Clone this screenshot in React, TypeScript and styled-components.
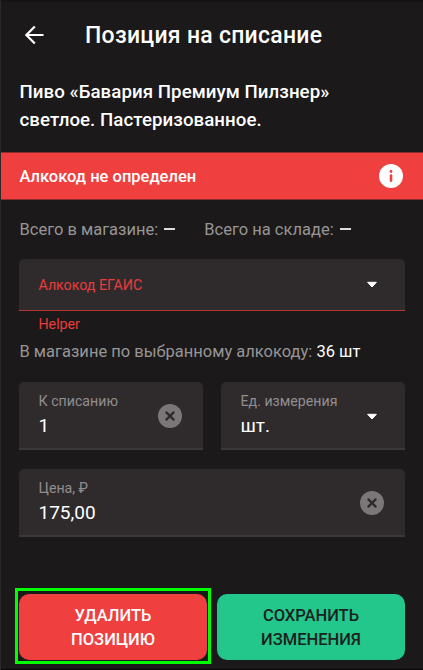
import React from "react";
import styled, { createGlobalStyle } from "styled-components";

const GlobalStyle = createGlobalStyle`
  * { box-sizing: border-box; }
  body { margin: 0; background: #1b191a; }
`;

const Screen = styled.main`
  display: flex;
  flex-direction: column;
  width: 423px;
  height: 670px;
  padding-left: 1px;
  overflow: hidden;
  color: #fff;
  background: #1b191a;
  font-family: Roboto, sans-serif;
  white-space: nowrap;
  box-shadow: inset 1px 0 #2b292a, inset 0 2px #151314, inset 0 -1px #050304;
`;

const Header = styled.header`
  display: flex;
  align-items: center;
  height: 70px;
  padding-left: 23.5px;
  gap: 41.5px;
`;

const Title = styled.h1`
  margin: 0;
  padding-top: 2px;
  font-size: 23px;
  font-weight: 500;
  line-height: 28px;
  letter-spacing: 0.27px;
`;

const Product = styled.h2`
  height: 82px;
  margin: 0;
  padding: 8px 0 0 18.5px;
  font-size: 18.7px;
  font-weight: 500;
  line-height: 28px;
  letter-spacing: 0.05px;
`;

const Banner = styled.section`
  display: flex;
  align-items: center;
  justify-content: space-between;
  height: 48px;
  padding: 0 20px 0 18.5px;
  background: #ef3f3e;
  border-top: 1px solid #8a2e2e;
  border-bottom: 1px solid #8a2e2e;
  font-size: 16.5px;
  font-weight: 500;
`;

const Totals = styled.div`
  display: flex;
  align-items: center;
  height: 59px;
  padding-left: 18.5px;
  gap: 29px;
`;

const Info = styled.span`
  color: #979596;
  font-size: 16.5px;
  line-height: 20px;
`;

const Value = styled.span`
  color: #fff;
`;

const Dash = styled.span`
  display: inline-block;
  width: 11px;
  height: 2px;
  margin-left: 2px;
  vertical-align: 5px;
  background: #dedddd;
`;

const Form = styled.form`
  display: flex;
  flex-direction: column;
  padding: 0 18px;
`;

const Field = styled.div<{ $error?: boolean }>`
  display: flex;
  align-items: center;
  justify-content: space-between;
  height: ${(p) => (p.$error ? 52 : 68)}px;
  padding: ${(p) => (p.$error ? "1px 27px 0 19.5px" : "2px 21px 0 19.5px")};
  background: #2f2b2c;
  border-bottom: ${(p) => (p.$error ? "1px solid #b73436" : "2px solid #3b3838")};
  border-radius: 5px 5px 0 0;
`;

const FieldText = styled.div`
  display: flex;
  flex-direction: column;
  height: 100%;
  padding-top: 8px;
`;

const Label = styled.span<{ $error?: boolean }>`
  color: ${(p) => (p.$error ? "#e93c3c" : "#918e8f")};
  font-size: 14.2px;
  line-height: 18px;
`;

const Input = styled.span`
  margin-top: 4px;
  font-size: 19px;
  line-height: 24px;
`;

const Helper = styled.div`
  height: 27px;
  padding: 4px 0 0 19.5px;
  color: #e93c3c;
  font-size: 14.2px;
  line-height: 18px;
`;

const StockLine = styled.div`
  height: 44px;
  padding: 4px 0 0 0.5px;
  line-height: 20px;
`;

const FieldRow = styled.div`
  display: grid;
  grid-template-columns: 184px 184px;
  justify-content: space-between;
  margin-bottom: 19px;
`;

const ArrowSlot = styled.div`
  display: flex;
  padding: 2px 6px 0 0;
`;

const Actions = styled.footer`
  display: flex;
  margin-top: 51px;
  padding-left: 14px;
  gap: 6px;
`;

const Highlight = styled.div`
  width: 196px;
  height: 76px;
  padding: 3px 1px 0 1px;
  border: 3px solid #00ff00;
`;

const Button = styled.button<{ $tone: "danger" | "success" }>`
  width: 188px;
  height: 66px;
  padding: 2px 0 0;
  border: 0;
  border-radius: 10px;
  background: ${(p) => (p.$tone === "danger" ? "#ef3f3e" : "#23c78b")};
  color: ${(p) => (p.$tone === "danger" ? "#fff" : "#1b211e")};
  font: 500 16.5px/24px Roboto, sans-serif;
`;

const SaveSlot = styled.div`
  padding-top: 6px;
`;

const BackIcon = () => (
  <svg width="19" height="20" viewBox="0 0 19 20" fill="none" stroke="#fff" strokeWidth="2.2">
    <path d="M18.5 10H2M9.8 1.5 1.4 10l8.4 8.5" />
  </svg>
);

const InfoIcon = () => (
  <svg width="24" height="24" viewBox="0 0 24 24">
    <circle cx="12" cy="12" r="12" fill="#fff" />
    <circle cx="12" cy="7.5" r="1.4" fill="#ef3f3e" />
    <path d="M12 11.6v5" stroke="#ef3f3e" strokeWidth="2.6" strokeLinecap="round" />
  </svg>
);

const DropIcon = () => (
  <svg width="12" height="8" viewBox="0 0 12 8">
    <path d="M1.6 1.3h8.8L6 6Z" fill="#fff" stroke="#fff" strokeWidth="1" strokeLinejoin="round" />
  </svg>
);

const ClearIcon = () => (
  <svg width="24" height="24" viewBox="0 0 24 24">
    <circle cx="12" cy="12" r="12" fill="#7b7778" />
    <path d="m8.4 8.4 7.2 7.2m0-7.2-7.2 7.2" stroke="#2f2b2c" strokeWidth="2.3" strokeLinecap="round" />
  </svg>
);

export default function App() {
  return (
    <>
      <GlobalStyle />
      <Screen>
        <Header>
          <BackIcon />
          <Title>Позиция на списание</Title>
        </Header>
        <Product>
          Пиво «Бавария Премиум Пилзнер»
          <br />
          светлое. Пастеризованное.
        </Product>
        <Banner>
          <span>Алкокод не определен</span>
          <InfoIcon />
        </Banner>
        <Totals>
          <Info>Всего в магазине: <Dash /></Info>
          <Info>Всего на складе: <Dash /></Info>
        </Totals>
        <Form>
          <Field $error>
            <Label $error>Алкокод ЕГАИС</Label>
            <DropIcon />
          </Field>
          <Helper>Helper</Helper>
          <StockLine>
            <Info>В магазине по выбранному алкокоду: <Value>36 шт</Value></Info>
          </StockLine>
          <FieldRow>
            <Field>
              <FieldText>
                <Label>К списанию</Label>
                <Input>1</Input>
              </FieldText>
              <ClearIcon />
            </Field>
            <Field>
              <FieldText>
                <Label>Ед. измерения</Label>
                <Input>шт.</Input>
              </FieldText>
              <ArrowSlot><DropIcon /></ArrowSlot>
            </Field>
          </FieldRow>
          <Field>
            <FieldText>
              <Label>Цена, ₽</Label>
              <Input>175,00</Input>
            </FieldText>
            <ClearIcon />
          </Field>
        </Form>
        <Actions>
          <Highlight>
            <Button $tone="danger">УДАЛИТЬ<br />ПОЗИЦИЮ</Button>
          </Highlight>
          <SaveSlot>
            <Button $tone="success">СОХРАНИТЬ<br />ИЗМЕНЕНИЯ</Button>
          </SaveSlot>
        </Actions>
      </Screen>
    </>
  );
}
